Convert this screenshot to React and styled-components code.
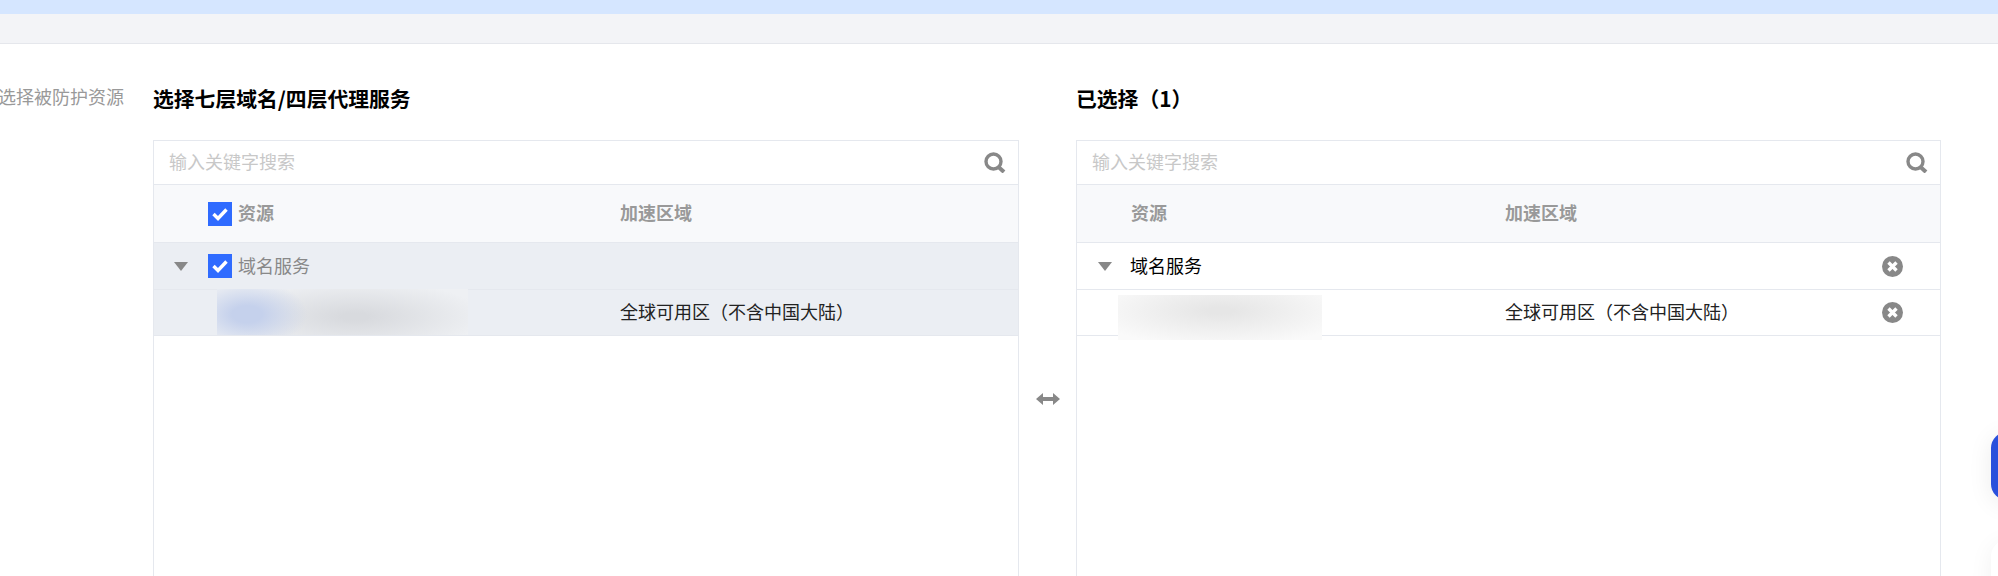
import React from 'react';
import styled, { createGlobalStyle } from 'styled-components';

const GlobalStyle = createGlobalStyle`
  html, body {
    margin: 0;
    padding: 0;
    height: 100%;
    overflow: hidden;
    background: #fff;
  }
  body {
    font-family: "Noto Sans CJK SC", "Noto Sans", sans-serif;
    font-size: 18px;
    color: #000;
  }
`;

const Page = styled.div`
  height: 576px;
  overflow: hidden;
  position: relative;
`;

const Notice = styled.div`
  height: 14px;
  background: #d5e6ff;
`;

const SubBar = styled.div`
  height: 29px;
  background: #f3f4f7;
  border-bottom: 1px solid #e5e7ec;
`;

const Form = styled.div`
  display: flex;
  padding-top: 40px;
`;

const FormLabel = styled.div`
  flex: 0 0 124px;
  min-width: 0;
  display: flex;
  justify-content: flex-end;
  height: 24px;
  line-height: 24px;
  color: #999;
  white-space: nowrap;
`;

const Transfer = styled.div`
  display: flex;
  margin-left: 29px;
`;

const Side = styled.section`
  width: ${(p) => p.$width}px;
  flex: none;
`;

const SideTitle = styled.h3`
  margin: 0 0 26px;
  height: 30px;
  line-height: 28px;
  font-size: 20.8px;
  font-weight: 700;
  color: #000;
`;

const Box = styled.div`
  height: 500px;
  border: 1px solid #e5e8ee;
  box-sizing: border-box;
`;

const SearchBar = styled.div`
  display: flex;
  align-items: center;
  height: 43px;
  padding: 0 12px 0 15px;
  border-bottom: 1px solid #e5e8ee;
`;

const SearchInput = styled.input`
  flex: 1;
  height: 38px;
  margin-bottom: 4px;
  border: 0;
  outline: 0;
  padding: 0;
  font: inherit;
  color: #000;
  background: transparent;
  &::placeholder {
    color: #c8c8c8;
    opacity: 1;
  }
`;

const Row = styled.div`
  position: relative;
  display: grid;
  grid-template-columns: ${(p) => p.$columns};
  align-items: center;
  height: ${(p) => p.$height}px;
  box-sizing: border-box;
  border-bottom: 1px solid #e5e8ee;
  background: ${(p) => p.$bg || '#fff'};
`;

const NameCell = styled.div`
  display: flex;
  align-items: center;
  padding-left: ${(p) => p.$indent}px;
  color: ${(p) => p.$color || '#000'};
`;

const CellText = styled.span`
  line-height: 24px;
  margin-bottom: 3px;
`;

const HeadText = styled(CellText)`
  font-weight: 700;
  color: #999;
`;

const RegionCell = styled(CellText)`
  color: #222;
`;

const Check = styled.span`
  display: flex;
  align-items: center;
  justify-content: center;
  flex: none;
  width: 24px;
  height: 24px;
  margin-right: 6px;
  background: #2f6bff;
`;

const Caret = styled.span`
  flex: none;
  width: 0;
  height: 0;
  margin-right: ${(p) => p.$gap}px;
  border-left: 7.5px solid transparent;
  border-right: 7.5px solid transparent;
  border-top: 9px solid #888;
`;

const ActionCell = styled.div`
  display: flex;
`;

const Blurred = styled.div`
  position: absolute;
  left: ${(p) => p.$left}px;
  top: ${(p) => p.$top}px;
  width: ${(p) => p.$width}px;
  height: ${(p) => p.$h}px;
  background: ${(p) => p.$fill};
`;

const Swap = styled.div`
  flex: 0 0 57px;
  height: 500px;
  display: flex;
  justify-content: center;
  padding-top: 308px;
  box-sizing: border-box;
`;

const FloatButton = styled.div`
  position: absolute;
  left: 1991px;
  top: 432px;
  width: 40px;
  height: 68px;
  border-radius: 16px;
  background: #2a50dc;
  box-shadow: 0 4px 24px rgba(0, 0, 0, 0.08);
`;

const FloatCard = styled.div`
  position: absolute;
  left: 1991px;
  top: 540px;
  width: 40px;
  height: 68px;
  border-radius: 16px;
  background: #fff;
  box-shadow: 0 4px 24px rgba(0, 0, 0, 0.06);
`;

const SearchIcon = () => (
  <svg width="22" height="21" viewBox="0 0 22 21" fill="none">
    <circle cx="9.5" cy="9.5" r="7.5" stroke="#888" strokeWidth="3.4" />
    <path d="M14.5 15l5.5 5" stroke="#888" strokeWidth="4" />
  </svg>
);

const CheckMark = () => (
  <svg width="18" height="16" viewBox="0 0 18 16" fill="none">
    <path d="M2.5 8l4.5 4.5L15.5 3.5" stroke="#fff" strokeWidth="3.4" />
  </svg>
);

const CloseIcon = () => (
  <svg width="21" height="21" viewBox="0 0 21 21">
    <circle cx="10.5" cy="10.5" r="10.5" fill="#888" />
    <path d="M6.5 6.5l8 8M14.5 6.5l-8 8" stroke="#fff" strokeWidth="3.4" />
  </svg>
);

const SwapIcon = () => (
  <svg width="24" height="14" viewBox="0 0 24 14">
    <path d="M0 7l7-6v4h10V1l7 6-7 6V9H7v4z" fill="#888" />
  </svg>
);

const LEFT_COLS = '466px 1fr';
const RIGHT_COLS = '428px 1fr 58px';

const App = () => {
  return (
    <Page>
      <GlobalStyle />
      <Notice />
      <SubBar />
      <Form>
        <FormLabel>选择被防护资源</FormLabel>
        <Transfer>
          <Side $width={866}>
            <SideTitle>选择七层域名/四层代理服务</SideTitle>
            <Box>
              <SearchBar>
                <SearchInput placeholder="输入关键字搜索" />
                <SearchIcon />
              </SearchBar>
              <Row $columns={LEFT_COLS} $height={58} $bg="#f8f9fb">
                <NameCell $indent={54}>
                  <Check><CheckMark /></Check>
                  <HeadText>资源</HeadText>
                </NameCell>
                <HeadText>加速区域</HeadText>
              </Row>
              <Row $columns={LEFT_COLS} $height={47} $bg="#ebeef3">
                <NameCell $indent={20} $color="#888">
                  <Caret $gap={20} />
                  <Check><CheckMark /></Check>
                  <CellText>域名服务</CellText>
                </NameCell>
                <span />
              </Row>
              <Row $columns={LEFT_COLS} $height={46} $bg="#ebeef3">
                <span />
                <RegionCell>全球可用区（不含中国大陆）</RegionCell>
                <Blurred
                  $left={63}
                  $top={-1}
                  $width={251}
                  $h={46}
                  $fill="radial-gradient(ellipse 60px 34px at 12% 55%, #c5d1ec 25%, rgba(197,209,236,0) 100%), radial-gradient(ellipse 130px 36px at 55% 60%, #d8dade 10%, rgba(216,218,222,0) 100%), #eef0f3"
                />
              </Row>
            </Box>
          </Side>
          <Swap>
            <SwapIcon />
          </Swap>
          <Side $width={865}>
            <SideTitle>已选择（1）</SideTitle>
            <Box>
              <SearchBar>
                <SearchInput placeholder="输入关键字搜索" />
                <SearchIcon />
              </SearchBar>
              <Row $columns={RIGHT_COLS} $height={58} $bg="#f8f9fb">
                <NameCell $indent={54}>
                  <HeadText>资源</HeadText>
                </NameCell>
                <HeadText>加速区域</HeadText>
                <span />
              </Row>
              <Row $columns={RIGHT_COLS} $height={47}>
                <NameCell $indent={21}>
                  <Caret $gap={18} />
                  <CellText>域名服务</CellText>
                </NameCell>
                <span />
                <ActionCell><CloseIcon /></ActionCell>
              </Row>
              <Row $columns={RIGHT_COLS} $height={46}>
                <span />
                <RegionCell>全球可用区（不含中国大陆）</RegionCell>
                <ActionCell><CloseIcon /></ActionCell>
                <Blurred
                  $left={41}
                  $top={5}
                  $width={204}
                  $h={45}
                  $fill="radial-gradient(ellipse 130px 36px at 50% 35%, #e6e6e6 10%, rgba(230,230,230,0) 100%), #fafafa"
                />
              </Row>
            </Box>
          </Side>
        </Transfer>
      </Form>
      <FloatButton />
      <FloatCard />
    </Page>
  );
};

export default App;
